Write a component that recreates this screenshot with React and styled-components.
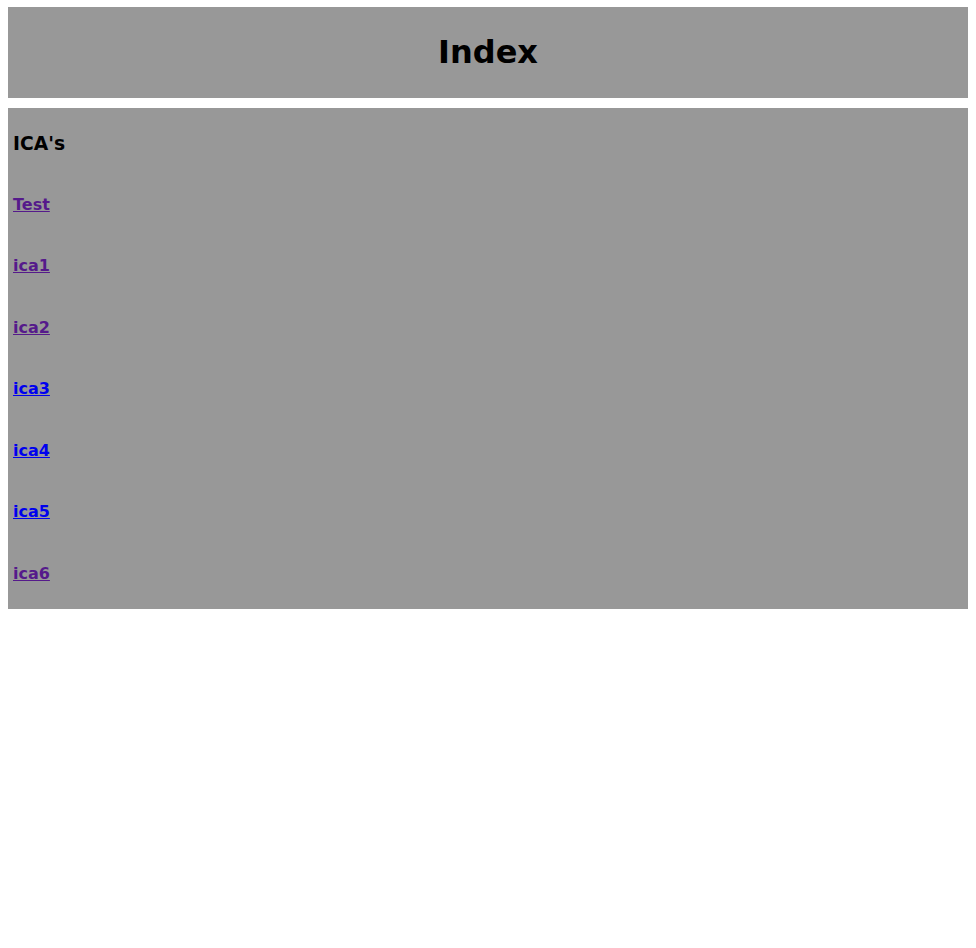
import React from "react";
import styled, { createGlobalStyle } from "styled-components";

const GlobalStyle = createGlobalStyle`
  body {
    margin: 7px 8px 8px;
    background: #ffffff;
    color: #000000;
    font-family: "DejaVu Sans", sans-serif;
  }
`;

const Page = styled.div`
  display: grid;
  gap: 10px;
`;

const Header = styled.header`
  display: grid;
  padding: 5px;
  background: #989898;
  text-align: center;
`;

/* Headings keep the browser's own margins. */
const Title = styled.h1`
  font-size: 32px;
`;

const Panel = styled.main`
  display: grid;
  padding: 5px;
  background: #989898;
`;

const SectionTitle = styled.h3`
  line-height: 23px;
`;

const LinkList = styled.nav`
  display: grid;
`;

const LinkHeading = styled.h4`
  font-weight: bold;
`;

const PageLink = styled.a`
  color: ${({ $visited }) => ($visited ? "#551a8b" : "#0000ee")};
  text-decoration: underline;
`;

const links = [
  { label: "Test", visited: true },
  { label: "ica1", visited: true },
  { label: "ica2", visited: true },
  { label: "ica3", visited: false },
  { label: "ica4", visited: false },
  { label: "ica5", visited: false },
  { label: "ica6", visited: true },
];

export default function App() {
  return (
    <Page>
      <GlobalStyle />
      <Header>
        <Title>Index</Title>
      </Header>
      <Panel>
        <SectionTitle>ICA's</SectionTitle>
        <LinkList aria-label="ICA's">
          {links.map(({ label, visited }) => (
            <LinkHeading key={label}>
              <PageLink href={`#${label.toLowerCase()}`} $visited={visited}>
                {label}
              </PageLink>
            </LinkHeading>
          ))}
        </LinkList>
      </Panel>
    </Page>
  );
}
